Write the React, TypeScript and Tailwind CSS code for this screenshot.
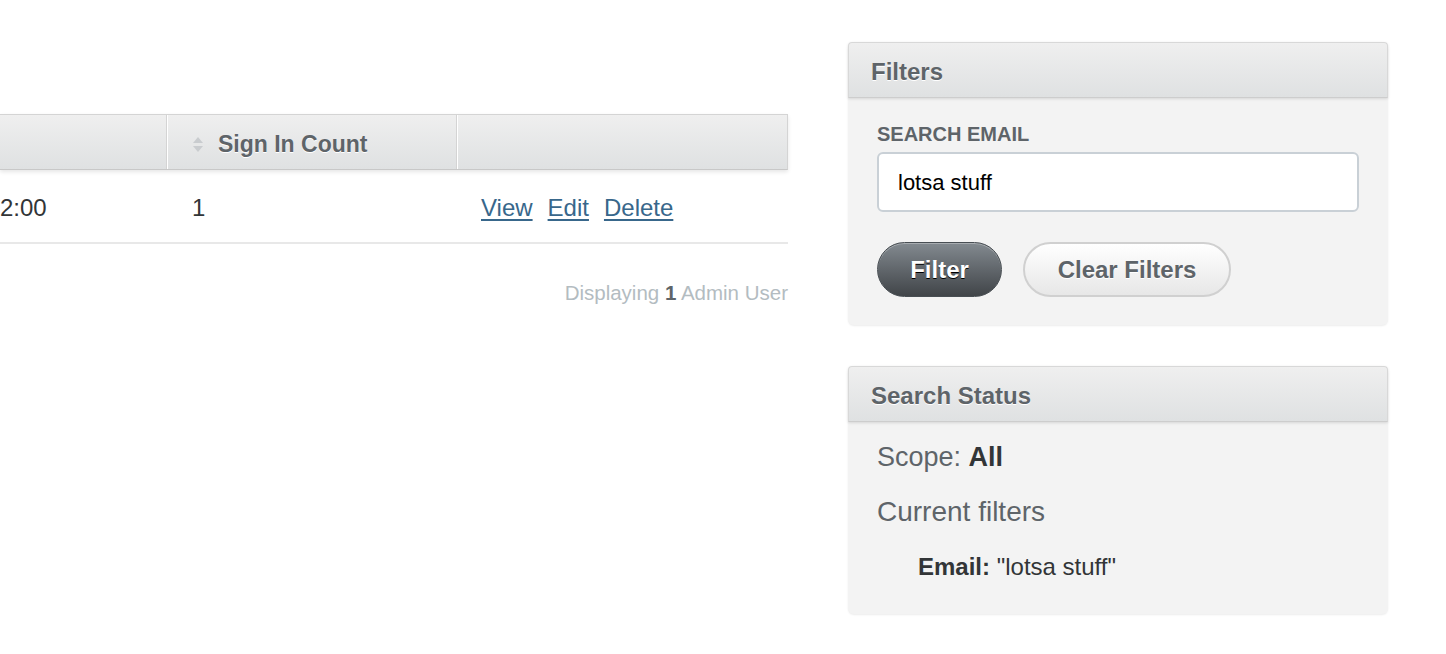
const font = { fontFamily: '"Liberation Sans", Arial, sans-serif' };

function SortIcon() {
  return (
    <span className="flex flex-col items-center mr-[14px]">
      <svg width="12" height="7" viewBox="0 0 12 7" className="mb-[2px]">
        <path d="M6 0 L11 6 L1 6 Z" fill="#c9cccf" />
      </svg>
      <svg width="12" height="7" viewBox="0 0 12 7">
        <path d="M1 0 L11 0 L6 6 Z" fill="#c9cccf" />
      </svg>
    </span>
  );
}

function PanelHeader({ title }: { title: string }) {
  return (
    <div className="h-[56px] flex items-center pt-[3px] px-[22px] border border-[#d8d8d8] border-b-[#cdcdcd] bg-linear-to-b from-[#efefef] to-[#dfe1e2] shadow-[0_1px_3px_rgba(0,0,0,0.12)] text-[24px] font-bold text-[#5e6469] [text-shadow:0_1px_0_#fff] rounded-t-[4px]">
      {title}
    </div>
  );
}

export default function App() {
  return (
    <div className="w-[1446px] h-[654px] bg-white overflow-hidden flex items-start pt-[42px]" style={font}>
      {/* main table */}
      <div className="w-[788px] mt-[72px]">
        <div className="flex h-[56px] border-t border-b border-[#d4d4d4] border-b-[#c8c8c8] border-r bg-linear-to-b from-[#efefef] to-[#dfe1e2] shadow-[0_2px_4px_rgba(0,0,0,0.1)] text-[#5e6469] font-bold text-[23px] [text-shadow:0_1px_0_#fff]">
          <div className="w-[167px] border-r border-[#d4d4d4]" />
          <div className="w-[290px] flex items-center pt-[5px] pl-[24px] border-l border-l-white border-r border-[#d4d4d4]">
            <SortIcon />
            Sign In Count
          </div>
          <div className="flex-1 border-l border-l-white" />
        </div>
        <div className="flex h-[74px] items-center pt-[4px] border-b-2 border-[#e8e8e8] text-[24px] text-[#323537]">
          <div className="w-[167px]">2:00</div>
          <div className="w-[290px] pl-[25px]">1</div>
          <div className="flex-1 pl-[24px] flex gap-[15px] text-[#38678b]">
            <a className="underline underline-offset-[3px] decoration-2">View</a>
            <a className="underline underline-offset-[3px] decoration-2">Edit</a>
            <a className="underline underline-offset-[3px] decoration-2">Delete</a>
          </div>
        </div>
        <div className="mt-[37px] text-right text-[20.5px] leading-[24px] text-[#b3bcc1]">
          Displaying <b className="text-[#5e6469]">1</b> Admin User
        </div>
      </div>

      {/* sidebar */}
      <div className="w-[540px] ml-[60px] flex flex-col gap-[41px]">
        <div className="bg-[#f3f3f3] rounded-[6px] shadow-[0_1px_2px_rgba(0,0,0,0.08)]">
          <PanelHeader title="Filters" />
          <div className="px-[29px] pt-[24px] pb-[28px]">
            <div className="text-[20px] leading-[24px] font-bold text-[#5e6469] mb-[6px]">SEARCH EMAIL</div>
            <div className="h-[60px] bg-white border-2 border-[#c9d0d6] rounded-[6px] flex items-center px-[19px] text-[22px] text-black">
              lotsa stuff
            </div>
            <div className="flex gap-[21px] mt-[30px]">
              <button className="h-[55px] w-[125px] rounded-full border border-[#484e53] bg-linear-to-b from-[#838a90] to-[#414549] text-white font-bold text-[24px] [text-shadow:0_1px_0_#000] shadow-[inset_0_1px_0_rgba(255,255,255,0.3)]">
                Filter
              </button>
              <button className="h-[55px] w-[208px] rounded-full border-2 border-[#d0d0d0] bg-linear-to-b from-white to-[#e7e7e7] text-[#5e6469] font-bold text-[24px] [text-shadow:0_1px_0_#fff]">
                Clear Filters
              </button>
            </div>
          </div>
        </div>

        <div className="bg-[#f3f3f3] rounded-[6px] shadow-[0_1px_2px_rgba(0,0,0,0.08)]">
          <PanelHeader title="Search Status" />
          <div className="px-[29px] pt-[19px] pb-[33px] text-[#5e6469]">
            <div className="text-[27px] leading-[32px]">
              Scope: <b className="text-[#323537]">All</b>
            </div>
            <div className="text-[28px] leading-[34px] mt-[22px]">Current filters</div>
            <div className="text-[24px] leading-[28px] mt-[24px] pl-[41px] text-[#323537]">
              <b>Email:</b> "lotsa stuff"
            </div>
          </div>
        </div>
      </div>
    </div>
  );
}
